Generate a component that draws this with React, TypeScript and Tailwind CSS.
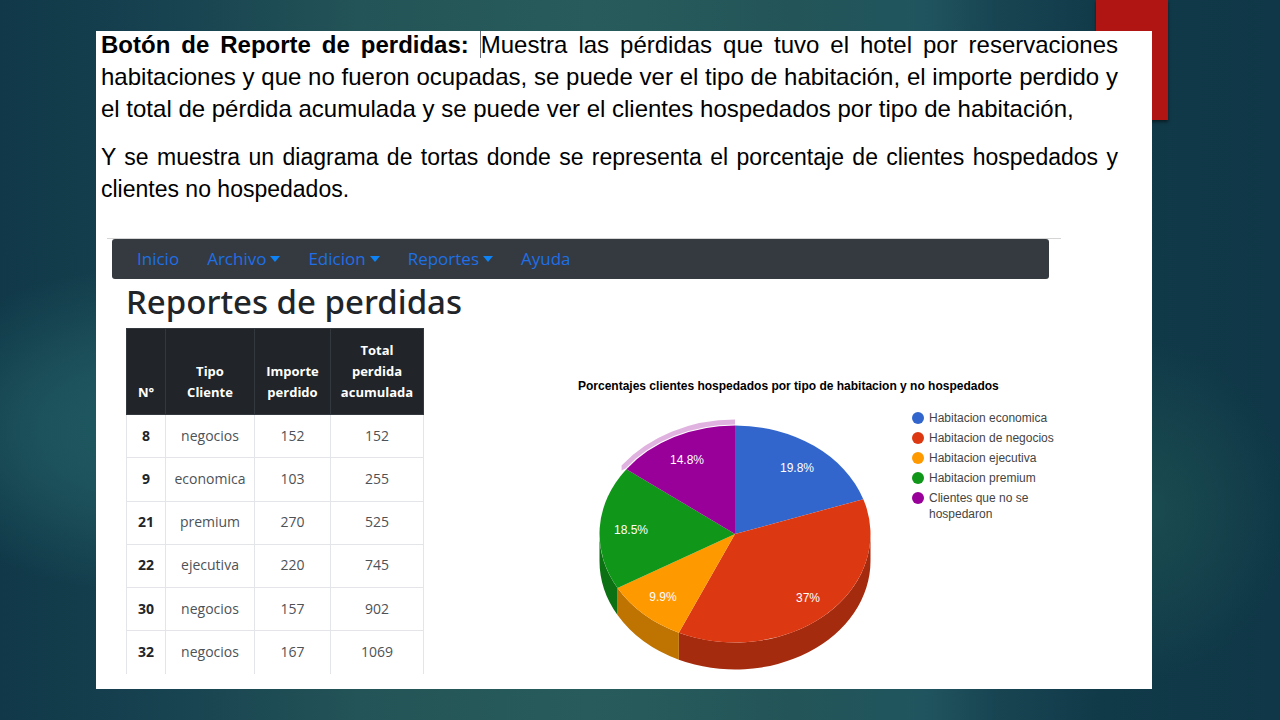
const rows = [
  { id: 8, tipo: 'negocios', importe: 152, total: 152 },
  { id: 9, tipo: 'economica', importe: 103, total: 255 },
  { id: 21, tipo: 'premium', importe: 270, total: 525 },
  { id: 22, tipo: 'ejecutiva', importe: 220, total: 745 },
  { id: 30, tipo: 'negocios', importe: 157, total: 902 },
  { id: 32, tipo: 'negocios', importe: 167, total: 1069 },
];

const menu = [
  { label: 'Inicio', dropdown: false },
  { label: 'Archivo', dropdown: true },
  { label: 'Edicion', dropdown: true },
  { label: 'Reportes', dropdown: true },
  { label: 'Ayuda', dropdown: false },
];

const legend = [
  { label: 'Habitacion economica', dot: 'bg-[#3366cc]' },
  { label: 'Habitacion de negocios', dot: 'bg-[#dc3912]' },
  { label: 'Habitacion ejecutiva', dot: 'bg-[#ff9900]' },
  { label: 'Habitacion premium', dot: 'bg-[#109618]' },
  { label: 'Clientes que no se hospedaron', dot: 'bg-[#990099]' },
];

const slices = [
  { share: 19.8, color: '#3366cc', side: '#264d99', label: '19.8%', x: 199, y: 54 },
  { share: 37, color: '#dc3912', side: '#a52b0e', label: '37%', x: 210, y: 184 },
  { share: 9.9, color: '#ff9900', side: '#bf7300', label: '9.9%', x: 65, y: 183 },
  { share: 18.5, color: '#109618', side: '#0c7112', label: '18.5%', x: 33, y: 116 },
  { share: 14.8, color: '#990099', side: '#730073', label: '14.8%', x: 89, y: 46 },
];

const CX = 137;
const CY = 116;
const RX = 135.5;
const RY = 108.5;
const DEPTH = 27;

function point(percent: number, grow = 0) {
  const angle = (percent / 100) * Math.PI * 2;
  const x = CX + (RX + grow) * Math.sin(angle);
  const y = CY - (RY + grow) * Math.cos(angle);
  return { x, y };
}

function PieChart() {
  let start = 0;
  const arcs = slices.map((slice) => {
    const from = start;
    start += slice.share;
    return { ...slice, from, to: start };
  });
  const last = arcs[arcs.length - 1];
  const o1 = point(last.from, 6);
  const o2 = point(100, 6);
  const i1 = point(last.from, 1);
  const i2 = point(100, 1);

  return (
    <svg
      viewBox="0 0 274 256"
      className="mt-2 h-[256px] w-[274px] shrink-0"
      role="img"
      aria-label="Porcentajes de clientes"
    >
      {arcs.map((arc) => {
        const a = point(Math.max(arc.from, 25));
        const b = point(Math.min(arc.to, 75));
        if (arc.to <= 25 || arc.from >= 75) return null;
        return (
          <path
            key={arc.label}
            fill={arc.side}
            d={`M${a.x} ${a.y}A${RX} ${RY} 0 0 1 ${b.x} ${b.y}v${DEPTH}A${RX} ${RY} 0 0 0 ${a.x} ${a.y + DEPTH}Z`}
          />
        );
      })}
      {arcs.map((arc) => {
        const a = point(arc.from);
        const b = point(arc.to);
        return (
          <path
            key={arc.label}
            fill={arc.color}
            d={`M${CX} ${CY}L${a.x} ${a.y}A${RX} ${RY} 0 0 1 ${b.x} ${b.y}Z`}
          />
        );
      })}
      <path
        fill="#990099"
        fillOpacity="0.3"
        d={`M${o1.x} ${o1.y}A${RX + 6} ${RY + 6} 0 0 1 ${o2.x} ${o2.y}L${i2.x} ${i2.y}A${RX + 1} ${RY + 1} 0 0 0 ${i1.x} ${i1.y}L${o1.x} ${i1.y + 2}Z`}
      />
      {arcs.map((arc) => (
        <text
          key={arc.label}
          x={arc.x}
          y={arc.y}
          textAnchor="middle"
          fill="#ffffff"
          className="text-[12px]"
        >
          {arc.label}
        </text>
      ))}
    </svg>
  );
}

function Navbar() {
  return (
    <nav className="mr-[103px] ml-4 rounded-[3px] bg-[#343a40] px-[25px]">
      <ul className="flex h-10 items-center gap-7 text-[17px] text-[#1f6fe5]">
        {menu.map((item) => (
          <li key={item.label}>
            {item.dropdown ? (
              <button type="button" className="flex items-center gap-1">
                {item.label}
                <svg viewBox="0 0 10 6" className="h-[6px] w-[10px]" aria-hidden="true">
                  <path d="M0 0H10L5 6Z" fill="#0d83f5" />
                </svg>
              </button>
            ) : (
              <a href="#">{item.label}</a>
            )}
          </li>
        ))}
      </ul>
    </nav>
  );
}

function LossTable() {
  return (
    <table className="w-[297px] shrink-0 table-fixed border-collapse text-center text-[14px] leading-[21px]">
      <colgroup>
        <col className="w-[39px]" />
        <col className="w-[89px]" />
        <col className="w-[76px]" />
        <col className="w-[93px]" />
      </colgroup>
      <thead className="bg-[#212529] text-[13px] text-white">
        <tr className="h-[86px]">
          {['N°', 'Tipo Cliente', 'Importe perdido', 'Total perdida acumulada'].map((title) => (
            <th
              key={title}
              scope="col"
              className="border border-[#32383e] px-2 pb-[11px] align-bottom font-bold"
            >
              {title}
            </th>
          ))}
        </tr>
      </thead>
      <tbody className="text-[#4d5257]">
        {rows.map((row) => (
          <tr key={row.id} className="h-[43px] border-t border-[#e3e5e8]">
            <th scope="row" className="border-x border-[#e3e5e8] pb-0.5 font-bold text-[#212529]">
              {row.id}
            </th>
            <td className="border-x border-[#e3e5e8] pb-0.5">{row.tipo}</td>
            <td className="border-x border-[#e3e5e8] pb-0.5">{row.importe}</td>
            <td className="border-x border-[#e3e5e8] pb-0.5">{row.total}</td>
          </tr>
        ))}
      </tbody>
    </table>
  );
}

export default function App() {
  return (
    <div className="relative min-h-screen bg-[radial-gradient(ellipse_230px_160px_at_130px_430px,#1f5860_0%,#1f5860cc_40%,#1f586000_100%),radial-gradient(ellipse_150px_170px_at_1140px_510px,#1b4d50_0%,#1b4d5000_100%),linear-gradient(to_right,#103848_0%,#184351_14%,#235457_28%,#285c5c_46%,#235558_62%,#20555f_72%,#184452_78%,#113a49_86%,#0f3747_100%)] pt-[31px] pr-32 pb-[31px] pl-24">
      <div className="absolute top-0 right-28 h-[120px] w-[72px] bg-[#b01513] shadow-[0_2px_3px_rgba(0,0,0,0.5)]" />
      <main className="relative flow-root min-h-[658px] bg-white">
        <section className="-mt-0.5 space-y-4 pr-[34px] pl-[5px] text-justify font-['Liberation_Sans',Arial,sans-serif] leading-8 text-black">
          <p className="text-[24px] leading-8">
            <strong>Botón de Reporte de perdidas:</strong>{' '}
            <span className="border-l border-gray-500">Muestra</span> las pérdidas que tuvo el hotel
            por reservaciones habitaciones y que no fueron ocupadas, se puede ver el tipo de
            habitación, el importe perdido y el total de pérdida acumulada y se puede ver el
            clientes hospedados por tipo de habitación,
          </p>
          <p className="text-[23px] leading-8">
            Y se muestra un diagrama de tortas donde se representa el porcentaje de clientes
            hospedados y clientes no hospedados.
          </p>
        </section>

        <section className="mt-[33px] font-['Open_Sans','Noto_Sans',sans-serif]">
          <div className="mr-[91px] ml-[11px] h-px bg-[#d5d5d5]" />
          <Navbar />
          <div className="pl-[30px]">
            <h1 className="pb-[3px] font-['Noto_Sans',sans-serif] text-[33px] leading-[46px] font-medium text-[#212529]">
              Reportes de perdidas
            </h1>
            <div className="flex gap-[154px]">
              <LossTable />
              <figure className="min-w-0 pt-[50px] font-['Liberation_Sans',Arial,sans-serif] text-[12px] leading-4">
                <figcaption className="font-bold whitespace-nowrap text-black">
                  Porcentajes clientes hospedados por tipo de habitacion y no hospedados
                </figcaption>
                <div className="flex gap-10 pt-4 pl-5">
                  <PieChart />
                  <ul className="w-[146px] space-y-1 text-[#444444]">
                    {legend.map((item) => (
                      <li key={item.label} className="flex gap-[5px]">
                        <span className={`mt-0.5 size-3 shrink-0 rounded-full ${item.dot}`} />
                        <span>{item.label}</span>
                      </li>
                    ))}
                  </ul>
                </div>
              </figure>
            </div>
          </div>
        </section>
      </main>
    </div>
  );
}
